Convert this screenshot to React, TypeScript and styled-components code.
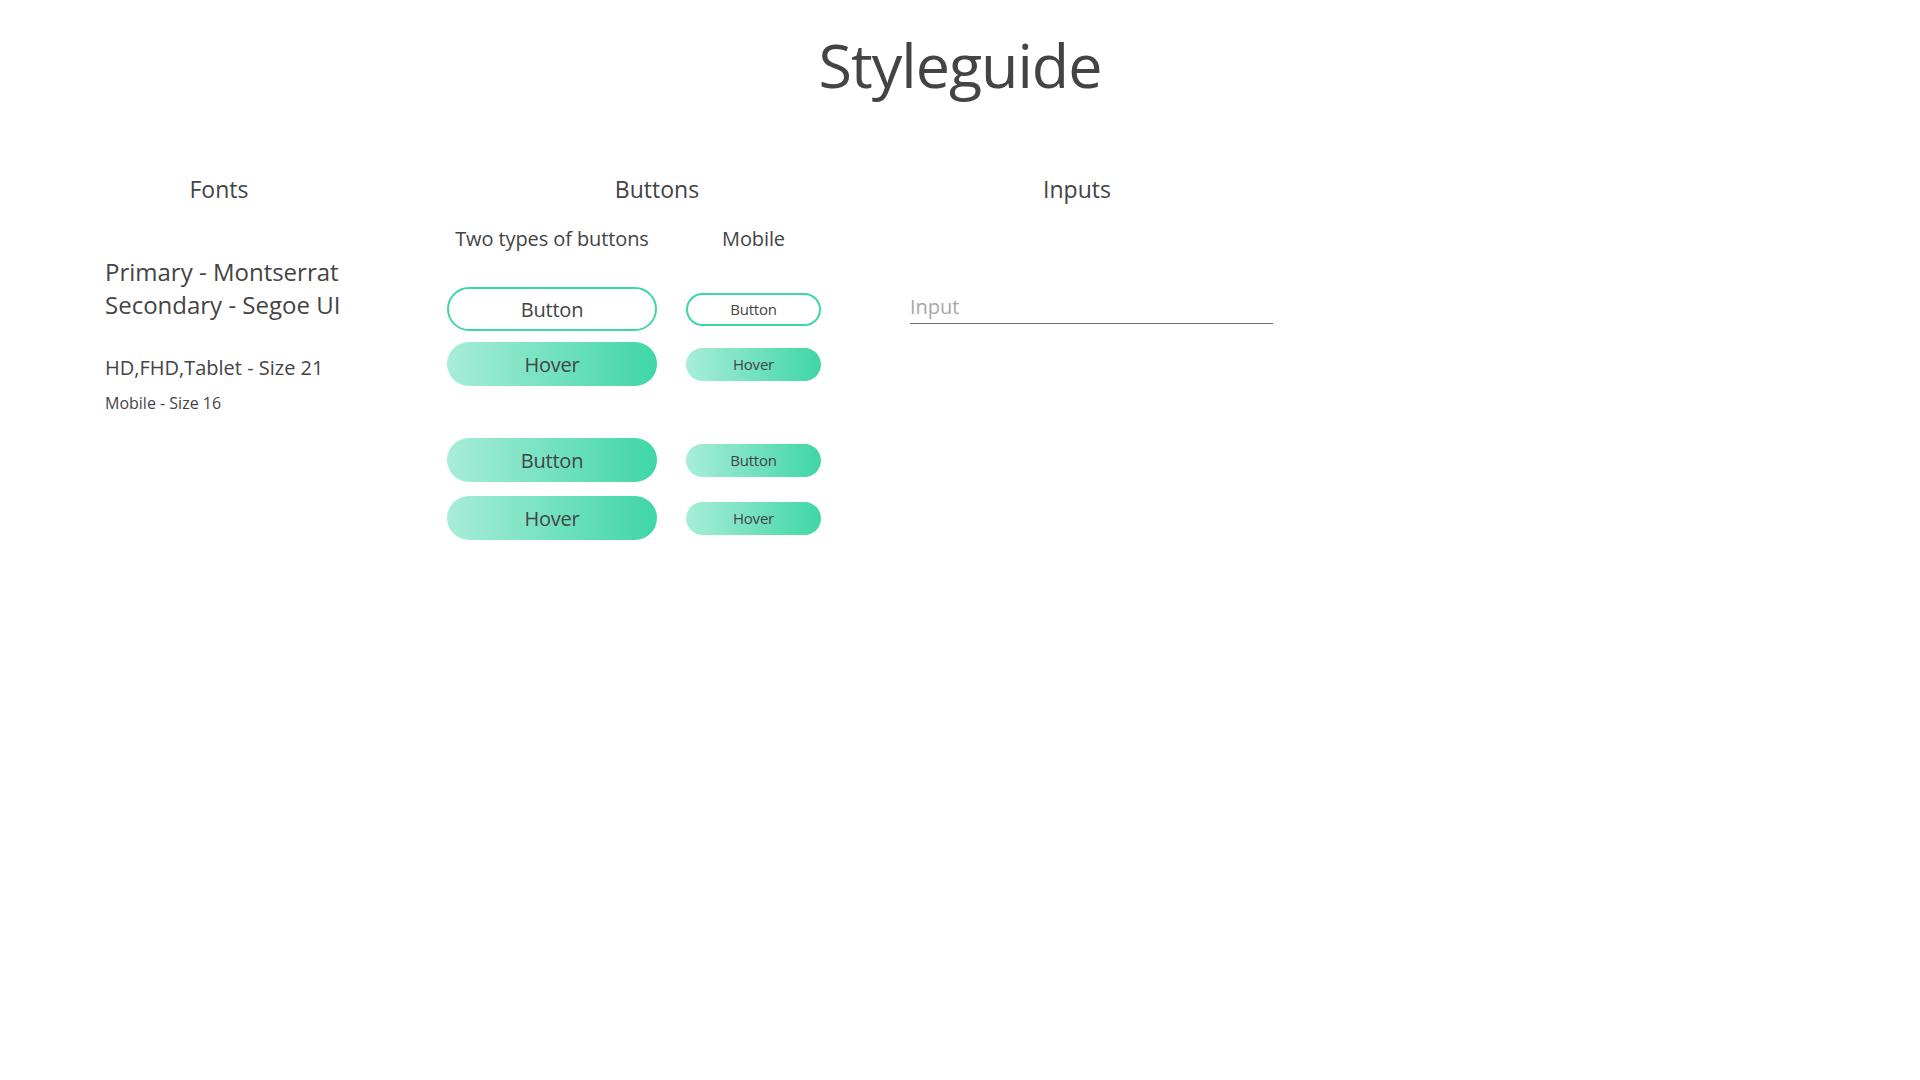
import React from 'react';
import styled, { createGlobalStyle } from 'styled-components';

const TEXT = '#444444';
const MINT = '#3fd6a6';
const MINT_LIGHT = '#a8edd8';

const GlobalStyle = createGlobalStyle`
  html, body {
    margin: 0;
    padding: 0;
    background: #ffffff;
  }
  body {
    font-family: 'Open Sans', 'Noto Sans', sans-serif;
    color: ${TEXT};
  }
`;

const Page = styled.div`
  width: 1920px;
  height: 1080px;
  display: flex;
  flex-direction: column;
`;

const Title = styled.h1`
  margin: 22px 0 0;
  text-align: center;
  font-size: 61px;
  font-weight: 400;
  line-height: 86px;
  letter-spacing: -1px;
`;

const Sections = styled.div`
  display: flex;
  align-items: flex-start;
  padding-left: 105px;
  margin-top: 65px;
`;

interface ColumnProps {
  width: number;
  offset?: number;
}

const Column = styled.section<ColumnProps>`
  width: ${(p) => p.width}px;
  margin-left: ${(p) => p.offset ?? 0}px;
  display: flex;
  flex-direction: column;
`;

const SectionHeader = styled.h2`
  margin: 0;
  text-align: center;
  font-size: 23px;
  font-weight: 400;
  line-height: 32px;
  white-space: nowrap;
`;

const FontNames = styled.div`
  margin-top: 50px;
  font-size: 24px;
  line-height: 33px;
  white-space: nowrap;
`;

interface SizeNoteProps {
  size: number;
  top: number;
}

const SizeNote = styled.div<SizeNoteProps>`
  font-size: ${(p) => p.size}px;
  line-height: ${(p) => Math.round(p.size * 1.4)}px;
  margin-top: ${(p) => p.top}px;
  white-space: nowrap;
`;

interface ButtonRowProps {
  top: number;
}

const ButtonRow = styled.div<ButtonRowProps>`
  display: grid;
  grid-template-columns: 210px 135px;
  column-gap: 29px;
  align-items: center;
  justify-items: center;
  margin-top: ${(p) => p.top}px;
`;

const SubHeader = styled.div`
  font-size: 20px;
  line-height: 30px;
  white-space: nowrap;
  letter-spacing: -0.1px;
`;

interface PillProps {
  filled?: boolean;
  small?: boolean;
}

const Pill = styled.button<PillProps>`
  box-sizing: border-box;
  width: ${(p) => (p.small ? 135 : 210)}px;
  height: ${(p) => (p.small ? 33 : 44)}px;
  border-radius: 999px;
  border: ${(p) => (p.filled ? 'none' : `2px solid ${MINT}`)};
  background: ${(p) =>
    p.filled ? `linear-gradient(90deg, ${MINT_LIGHT} 0%, ${MINT} 100%)` : '#ffffff'};
  color: ${TEXT};
  font-family: inherit;
  font-size: ${(p) => (p.small ? 15 : 20)}px;
  letter-spacing: -0.2px;
  padding: 0;
  cursor: pointer;
  outline: none;
`;

const InputField = styled.input`
  box-sizing: border-box;
  width: 363px;
  margin: 88px 0 0 33px;
  padding: 0 0 4px;
  border: none;
  border-bottom: 1px solid #707070;
  background: transparent;
  font-family: inherit;
  font-size: 20px;
  line-height: 26px;
  height: 31px;
  color: ${TEXT};
  outline: none;

  &::placeholder {
    color: #a8a8a8;
  }
`;

export default function App() {
  return (
    <Page>
      <GlobalStyle />
      <Title>Styleguide</Title>
      <Sections>
        <Column width={228}>
          <SectionHeader>Fonts</SectionHeader>
          <FontNames>
            Primary - Montserrat
            <br />
            Secondary - Segoe UI
          </FontNames>
          <SizeNote size={20} top={33}>
            HD,FHD,Tablet - Size 21
          </SizeNote>
          <SizeNote size={16} top={10}>
            Mobile - Size 16
          </SizeNote>
        </Column>

        <Column width={420} offset={114}>
          <SectionHeader>Buttons</SectionHeader>
          <ButtonRow top={19}>
            <SubHeader>Two types of buttons</SubHeader>
            <SubHeader>Mobile</SubHeader>
          </ButtonRow>
          <ButtonRow top={33}>
            <Pill>Button</Pill>
            <Pill small>Button</Pill>
          </ButtonRow>
          <ButtonRow top={11}>
            <Pill filled>Hover</Pill>
            <Pill filled small>Hover</Pill>
          </ButtonRow>
          <ButtonRow top={52}>
            <Pill filled>Button</Pill>
            <Pill filled small>Button</Pill>
          </ButtonRow>
          <ButtonRow top={14}>
            <Pill filled>Hover</Pill>
            <Pill filled small>Hover</Pill>
          </ButtonRow>
        </Column>

        <Column width={400} offset={10}>
          <SectionHeader>Inputs</SectionHeader>
          <InputField placeholder="Input" />
        </Column>
      </Sections>
    </Page>
  );
}
